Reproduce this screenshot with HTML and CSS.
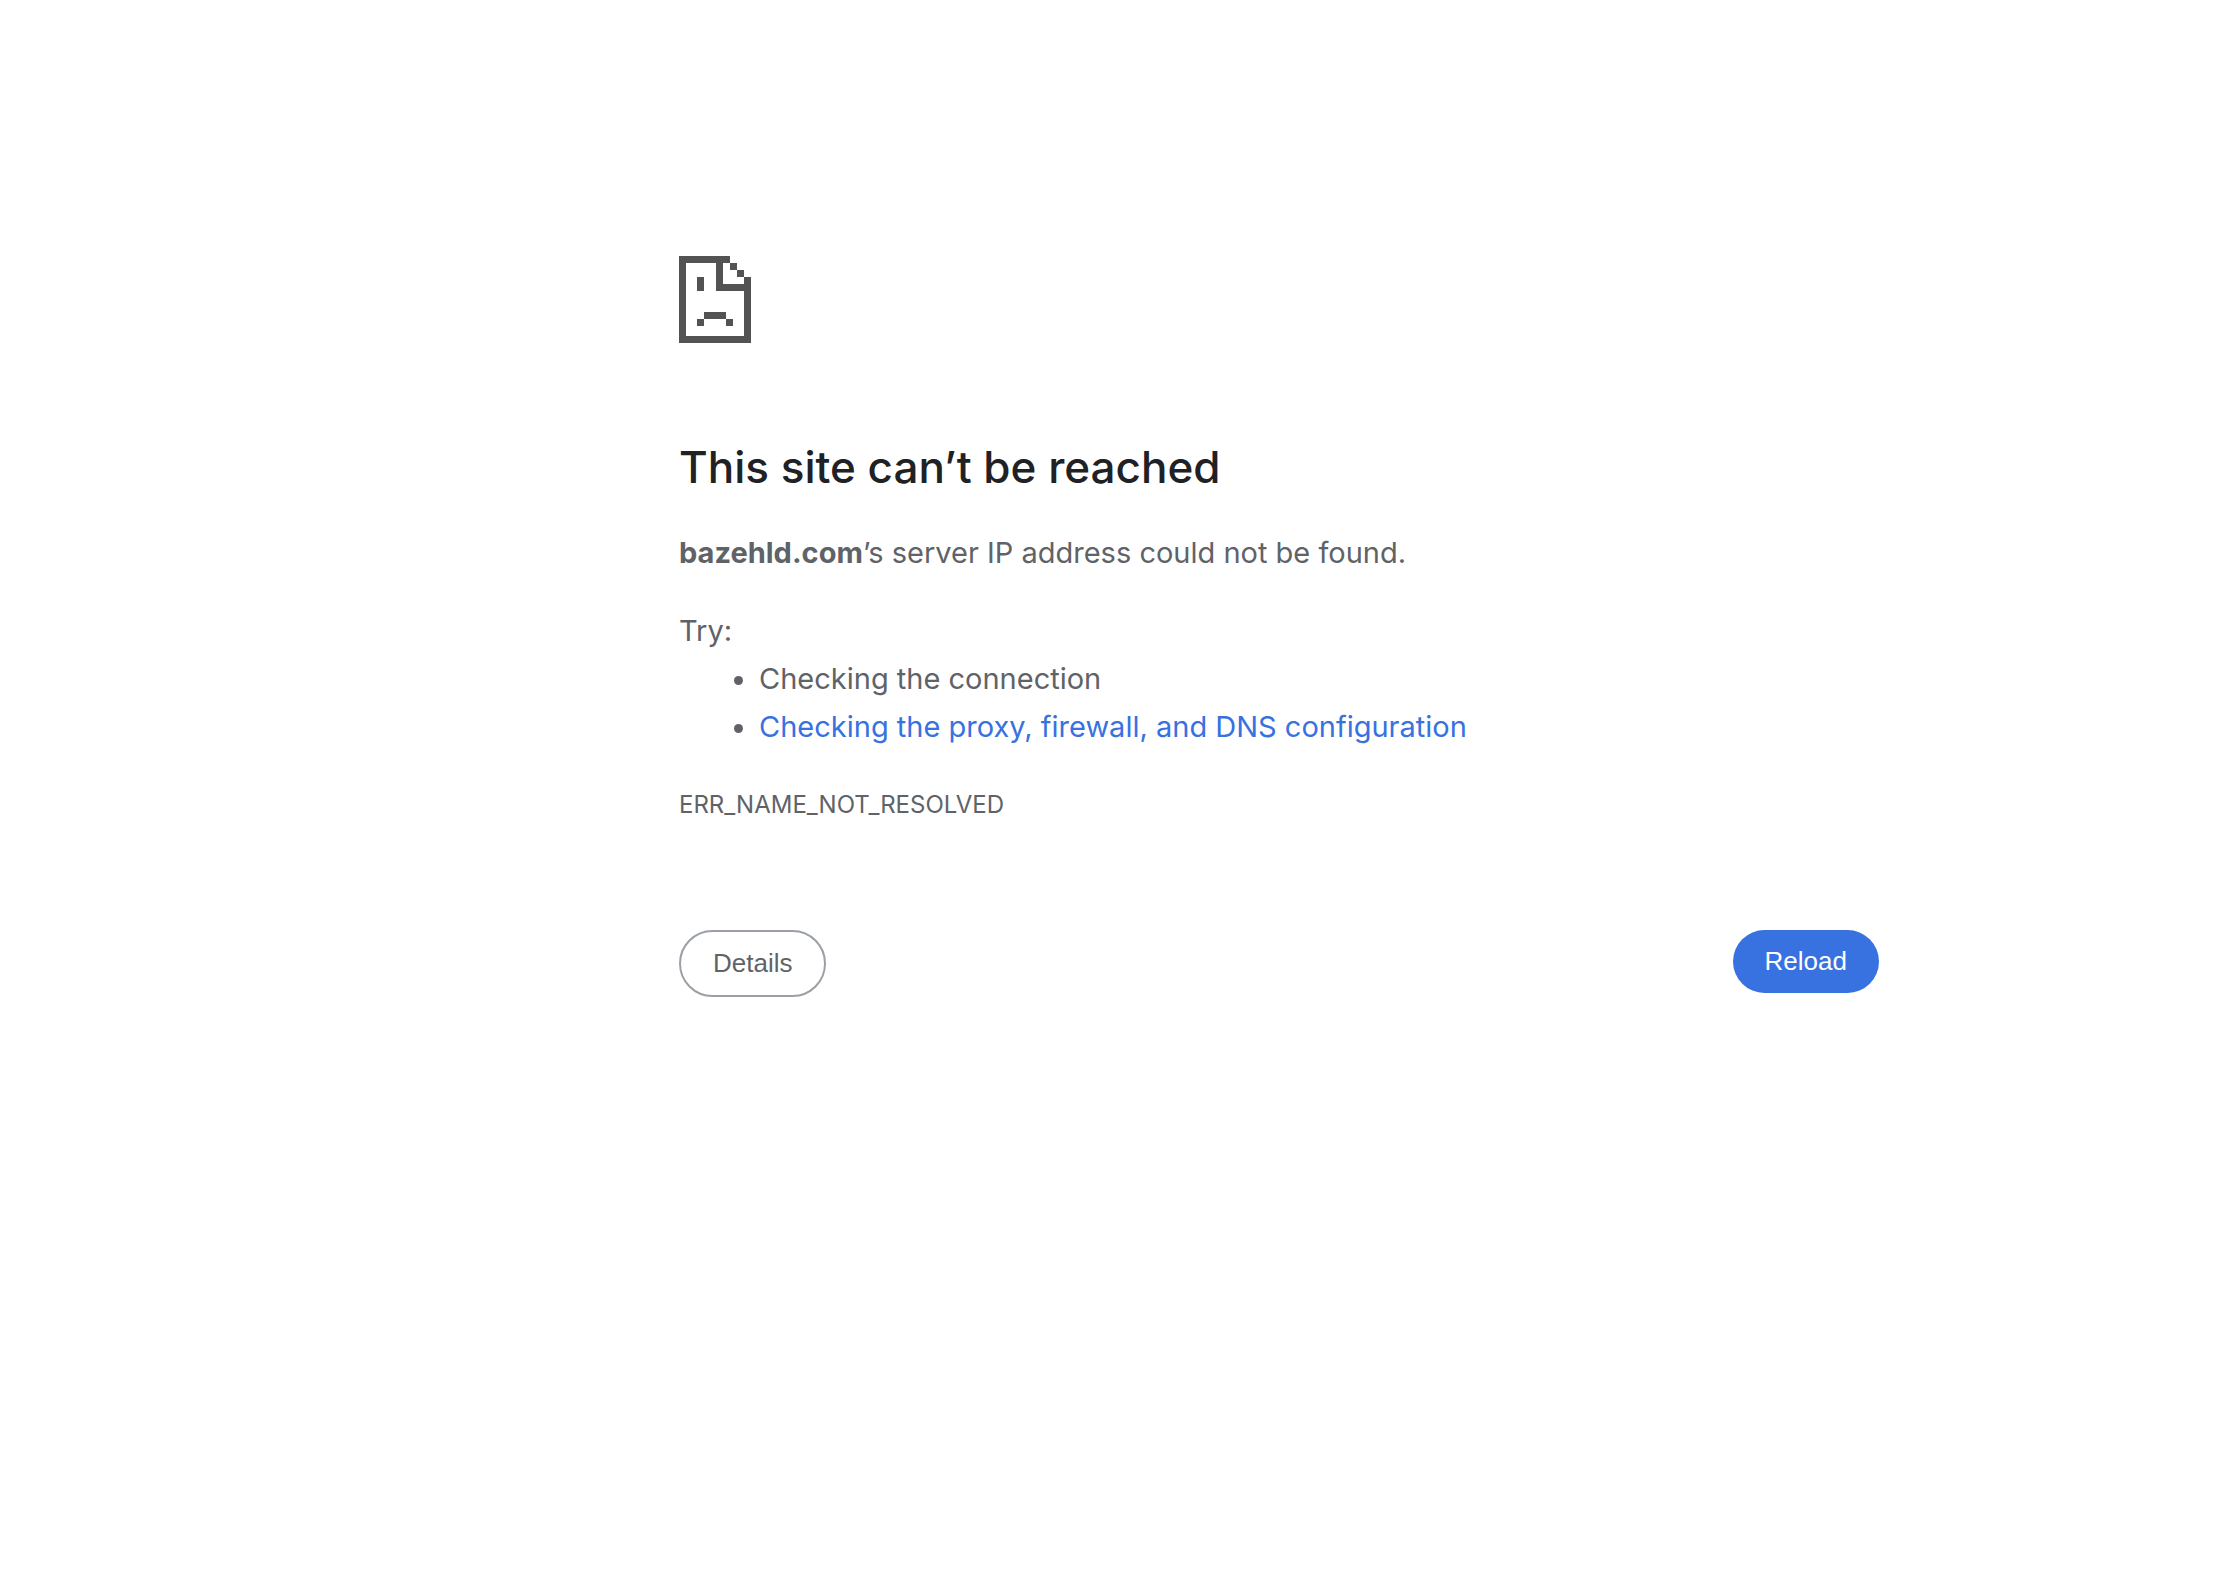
FILE: index.html
```html
<!DOCTYPE html>
<html lang="en">
<head>
  <meta charset="utf-8">
  <meta name="viewport" content="width=device-width, initial-scale=1">
  <title>bazehld.com</title>
  <link rel="stylesheet" href="styles.css">
</head>
<body>
  <main class="error-page">
    <svg class="error-icon" viewBox="0 0 72 87" shape-rendering="crispEdges" aria-hidden="true">
      <!-- page outline with folded corner -->
      <path d="M0 0H51V7H44V28H65V21H72V87H0ZM7 7V80H65V35H37V7Z" fill-rule="evenodd"/>
      <path d="M51 7h7v7h-7zM58 14h7v7h-7z"/>
      <!-- face -->
      <path d="M18 21h7v14h-7zM25 56h22v7h-22zM18 63h7v7h-7zM47 63h7v7h-7z"/>
    </svg>

    <h1>This site can’t be reached</h1>
    <p><strong>bazehld.com</strong>’s server IP address could not be found.</p>

    <div class="suggestions">
      <p>Try:</p>
      <ul>
        <li>Checking the connection</li>
        <li><a href="#buttons">Checking the proxy, firewall, and DNS configuration</a></li>
      </ul>
    </div>

    <div class="error-code">ERR_NAME_NOT_RESOLVED</div>

    <div class="buttons" id="buttons">
      <button type="button" class="details-button">Details</button>
      <button type="button" class="reload-button">Reload</button>
    </div>
  </main>
</body>
</html>
```

FILE: styles.css
```css
body {
  margin: 0;
  background-color: #fff;
  color: #5f6368;
  font-family: Inter, sans-serif;
  font-size: 29px;
  line-height: 48px;
}
.error-page {
  max-width: 1200px;
  margin-left: auto;
  margin-right: 357px;
  padding-top: 256px;
}
.error-icon {
  display: block;
  width: 72px;
  height: 87px;
  fill: #535353;
}
h1 {
  margin: 94px 0 32px;
  color: #202124;
  font-size: 44px;
  font-weight: 500;
  line-height: 60px;
}
p {
  margin: 0;
}
.suggestions {
  margin-top: 30px;
}
ul {
  margin: 0;
  padding-left: 80px;
}
a {
  color: #3871e0;
  text-decoration: none;
}
.error-code {
  margin-top: 30px;
  font-size: 24px;
}
.buttons {
  display: flex;
  justify-content: space-between;
  align-items: flex-start;
  margin-top: 101px;
}
button {
  padding: 16px 32px;
  border: none;
  border-radius: 40px;
  font-family: "Liberation Sans", Arial, sans-serif;
  font-size: 26px;
  line-height: 31px;
  cursor: pointer;
}
.details-button {
  border: 2px solid #9aa0a6;
  background-color: #fff;
  color: #5f6368;
}
.reload-button {
  background-color: #3871e0;
  color: #fff;
}
```
